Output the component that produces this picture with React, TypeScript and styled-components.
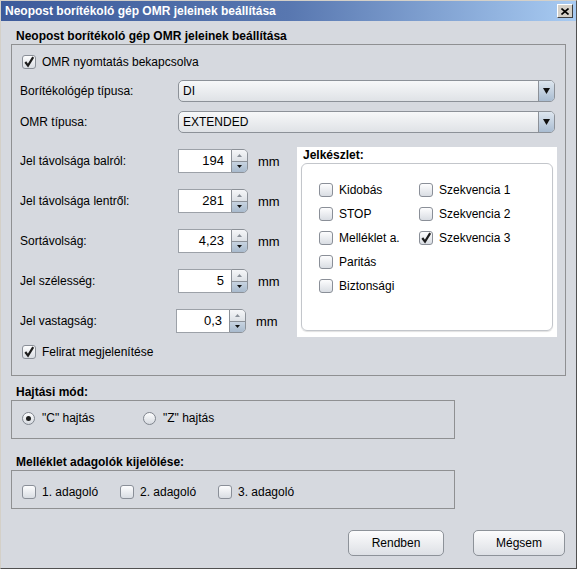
import React from 'react';
import styled, { createGlobalStyle } from 'styled-components';

const GlobalStyle = createGlobalStyle`
  html, body { margin: 0; padding: 0; background: #fff; }
  body {
    font-family: "Liberation Sans", Arial, sans-serif;
    font-size: 12px;
    color: #000;
  }
  * { box-sizing: border-box; }
`;

const Window = styled.div`
  width: 577px;
  height: 569px;
  background: #d6d9df;
  border-top: 1px solid #d4d0c8;
  border-left: 1px solid #d4d0c8;
  border-right: 1px solid #505050;
  border-bottom: 1px solid #505050;
  display: flex;
  flex-direction: column;
`;

const TitleBar = styled.div`
  height: 20px;
  display: flex;
  align-items: center;
  justify-content: space-between;
  padding: 0 3px 0 4px;
  background: linear-gradient(to right, #3d5b9b 0%, #5877b0 50%, #a8cbf2 100%);
`;

const TitleText = styled.span`
  color: #fff;
  font-weight: bold;
  font-size: 12px;
`;

const CloseButton = styled.div`
  width: 16px;
  height: 14px;
  background: #d4d0c8;
  border-top: 1px solid #fff;
  border-left: 1px solid #fff;
  border-right: 1px solid #404040;
  border-bottom: 1px solid #404040;
  display: flex;
  align-items: center;
  justify-content: center;
`;

const Body = styled.div`
  flex: 1;
  display: flex;
  flex-direction: column;
  padding: 8px 10px 0 10px;
`;

const Section = styled.div<{ $gap?: number; $width?: number }>`
  margin-top: ${p => p.$gap ?? 0}px;
  width: ${p => (p.$width ? `${p.$width}px` : 'auto')};
`;

const SectionTitle = styled.div`
  font-weight: bold;
  line-height: 14px;
  padding-left: 5px;
  margin-bottom: 1px;
`;

const Box = styled.div<{ $pad: string }>`
  border: 1px solid #8f9092;
  padding: ${p => p.$pad};
`;

const CheckRow = styled.label<{ $indent?: number; $top?: number }>`
  display: flex;
  align-items: center;
  gap: 6px;
  height: 18px;
  margin-left: ${p => p.$indent ?? 0}px;
  margin-top: ${p => p.$top ?? 0}px;
`;

const CheckBoxShape = styled.span`
  width: 14px;
  height: 14px;
  flex: none;
  border: 1px solid #8a8f98;
  border-radius: 3px;
  background: linear-gradient(#fdfdfe, #d9dde3);
  display: flex;
  align-items: center;
  justify-content: center;
`;

const ComboGrid = styled.div`
  display: grid;
  grid-template-columns: 158px 1fr;
  row-gap: 9px;
  margin-top: 9px;
  margin-right: 2px;
  align-items: center;
`;

const Combo = styled.div`
  height: 22px;
  display: flex;
  border: 1px solid #8c9198;
  border-radius: 5px;
  overflow: hidden;
  background: linear-gradient(#f7f8f9, #dfe2e6);
`;

const ComboText = styled.div`
  flex: 1;
  padding-left: 4px;
  line-height: 20px;
`;

const ComboArrow = styled.div`
  width: 16px;
  border-left: 1px solid #8c9198;
  background: linear-gradient(#dde6ef, #a9bcd1);
  display: flex;
  align-items: center;
  justify-content: center;
`;

const Columns = styled.div`
  display: flex;
  align-items: flex-start;
  margin-top: 14px;
`;

const LeftColumn = styled.div`
  padding-top: 2px;
  display: flex;
  flex-direction: column;
`;

const SpinnerList = styled.div`
  display: flex;
  flex-direction: column;
  gap: 16px;
`;

const SpinnerRow = styled.div`
  display: flex;
  align-items: center;
  height: 24px;
`;

const RowLabel = styled.span`
  width: 158px;
`;

const Spinner = styled.div<{ $nudge?: number }>`
  display: flex;
  width: 70px;
  height: 24px;
  margin-left: ${p => p.$nudge ?? 0}px;
`;

const SpinField = styled.div`
  flex: 1;
  background: #fff;
  border: 1px solid #9ca1a8;
  border-right: none;
  text-align: right;
  padding-right: 7px;
  line-height: 22px;
  font-size: 13px;
`;

const SpinButtons = styled.div`
  width: 17px;
  display: flex;
  flex-direction: column;
  border: 1px solid #8c9198;
  border-radius: 0 5px 5px 0;
  overflow: hidden;
`;

const SpinHalf = styled.div<{ $down?: boolean }>`
  flex: 1;
  display: flex;
  align-items: center;
  justify-content: center;
  background: ${p => (p.$down ? 'linear-gradient(#c8d4e1, #a8bacd)' : 'linear-gradient(#f5f6f8, #dde1e6)')};
  border-top: ${p => (p.$down ? '1px solid #8c9198' : 'none')};
`;

const Unit = styled.span`
  margin-left: 10px;
  font-size: 13px;
`;

const CharsetPanel = styled.div`
  margin-left: auto;
  width: 260px;
  background: #fff;
  padding: 1px 4px 6px 4px;
`;

const CharsetTitle = styled.div`
  font-weight: bold;
  line-height: 14px;
  margin-left: 2px;
  margin-bottom: 1px;
`;

const CharsetBox = styled.div`
  height: 168px;
  border: 1px solid #c3c6cb;
  border-radius: 6px;
  box-shadow: 0 1px 1px rgba(0, 0, 0, 0.12);
  padding: 17px 0 0 17px;
  display: grid;
  grid-template-columns: 100px auto;
  grid-template-rows: repeat(5, 18px);
  grid-auto-flow: column;
  row-gap: 6px;
  align-content: start;
`;

const OptionRow = styled.div`
  display: flex;
  align-items: center;
`;

const OptionItem = styled.label<{ $width: number; $gap: number }>`
  display: flex;
  align-items: center;
  gap: ${p => p.$gap}px;
  width: ${p => p.$width}px;
  height: 18px;
`;

const RadioShape = styled.span`
  width: 13px;
  height: 13px;
  flex: none;
  border: 1px solid #80858e;
  border-radius: 50%;
  background: linear-gradient(#fdfdfe, #d6dae0);
  display: flex;
  align-items: center;
  justify-content: center;
`;

const RadioDot = styled.span`
  width: 5px;
  height: 5px;
  border-radius: 50%;
  background: #1e1e1e;
`;

const ButtonRow = styled.div`
  display: flex;
  justify-content: flex-end;
  gap: 29px;
  margin-top: 21px;
  margin-right: 1px;
`;

const DialogButton = styled.button<{ $width: number }>`
  width: ${p => p.$width}px;
  height: 26px;
  border: 1px solid #8d9299;
  border-radius: 5px;
  background: linear-gradient(#fcfcfd, #dde0e5);
  font-family: "Liberation Sans", Arial, sans-serif;
  font-size: 12px;
  color: #000;
  padding: 0;
`;

const Check = ({ checked }: { checked?: boolean }) => (
  <CheckBoxShape>
    {checked && (
      <svg width="12" height="12" viewBox="0 0 12 12">
        <path d="M2.3 6 L5 9.6 L10.2 1.2" fill="none" stroke="#1c1c1c" strokeWidth="2.2" />
      </svg>
    )}
  </CheckBoxShape>
);

const Radio = ({ selected }: { selected?: boolean }) => (
  <RadioShape>{selected && <RadioDot />}</RadioShape>
);

const DownTriangle = ({ w, h, color }: { w: number; h: number; color: string }) => (
  <svg width={w} height={h} viewBox={`0 0 ${w} ${h}`}>
    <polygon points={`0,0 ${w},0 ${w / 2},${h}`} fill={color} />
  </svg>
);

const UpTriangle = ({ w, h, color }: { w: number; h: number; color: string }) => (
  <svg width={w} height={h} viewBox={`0 0 ${w} ${h}`}>
    <polygon points={`0,${h} ${w},${h} ${w / 2},0`} fill={color} />
  </svg>
);

const spinners = [
  { label: 'Jel távolsága balról:', value: '194' },
  { label: 'Jel távolsága lentről:', value: '281' },
  { label: 'Sortávolság:', value: '4,23' },
  { label: 'Jel szélesség:', value: '5' },
  { label: 'Jel vastagság:', value: '0,3', nudge: -2 },
];

const marks = [
  { label: 'Kidobás' },
  { label: 'STOP' },
  { label: 'Melléklet a.' },
  { label: 'Paritás' },
  { label: 'Biztonsági' },
  { label: 'Szekvencia 1' },
  { label: 'Szekvencia 2' },
  { label: 'Szekvencia 3', checked: true },
];

const feeders = ['1. adagoló', '2. adagoló', '3. adagoló'];

const App: React.FC = () => {
  return (
    <>
      <GlobalStyle />
      <Window>
        <TitleBar>
          <TitleText>Neopost borítékoló gép OMR jeleinek beállítása</TitleText>
          <CloseButton>
            <svg width="8" height="7" viewBox="0 0 8 7">
              <path d="M0.5 0.5 L7.5 6.5 M7.5 0.5 L0.5 6.5" stroke="#000" strokeWidth="1.6" />
            </svg>
          </CloseButton>
        </TitleBar>

        <Body>
          <Section>
            <SectionTitle>Neopost borítékoló gép OMR jeleinek beállítása</SectionTitle>
            <Box $pad="8px 8px 14px 8px">
              <CheckRow $indent={2}>
                <Check checked />
                <span>OMR nyomtatás bekapcsolva</span>
              </CheckRow>

              <ComboGrid>
                <span>Borítékológép típusa:</span>
                <Combo>
                  <ComboText>DI</ComboText>
                  <ComboArrow>
                    <DownTriangle w={7} h={6} color="#111" />
                  </ComboArrow>
                </Combo>
                <span>OMR típusa:</span>
                <Combo>
                  <ComboText>EXTENDED</ComboText>
                  <ComboArrow>
                    <DownTriangle w={7} h={6} color="#111" />
                  </ComboArrow>
                </Combo>
              </ComboGrid>

              <Columns>
                <LeftColumn>
                  <SpinnerList>
                    {spinners.map(s => (
                      <SpinnerRow key={s.label}>
                        <RowLabel>{s.label}</RowLabel>
                        <Spinner $nudge={s.nudge}>
                          <SpinField>{s.value}</SpinField>
                          <SpinButtons>
                            <SpinHalf>
                              <UpTriangle w={5} h={3} color="#8a9099" />
                            </SpinHalf>
                            <SpinHalf $down>
                              <DownTriangle w={5} h={3} color="#111" />
                            </SpinHalf>
                          </SpinButtons>
                        </Spinner>
                        <Unit>mm</Unit>
                      </SpinnerRow>
                    ))}
                  </SpinnerList>
                  <CheckRow $indent={2} $top={10}>
                    <Check checked />
                    <span>Felirat megjelenítése</span>
                  </CheckRow>
                </LeftColumn>

                <CharsetPanel>
                  <CharsetTitle>Jelkészlet:</CharsetTitle>
                  <CharsetBox>
                    {marks.map(m => (
                      <CheckRow key={m.label}>
                        <Check checked={m.checked} />
                        <span>{m.label}</span>
                      </CheckRow>
                    ))}
                  </CharsetBox>
                </CharsetPanel>
              </Columns>
            </Box>
          </Section>

          <Section $gap={9} $width={444}>
            <SectionTitle>Hajtási mód:</SectionTitle>
            <Box $pad="8px 10px 11px 10px">
              <OptionRow>
                <OptionItem $width={121} $gap={7}>
                  <Radio selected />
                  <span>"C" hajtás</span>
                </OptionItem>
                <OptionItem $width={121} $gap={7}>
                  <Radio />
                  <span>"Z" hajtás</span>
                </OptionItem>
              </OptionRow>
            </Box>
          </Section>

          <Section $gap={16} $width={444}>
            <SectionTitle>Melléklet adagolók kijelölése:</SectionTitle>
            <Box $pad="12px 10px 7px 10px">
              <OptionRow>
                {feeders.map(f => (
                  <OptionItem key={f} $width={98} $gap={6}>
                    <Check />
                    <span>{f}</span>
                  </OptionItem>
                ))}
              </OptionRow>
            </Box>
          </Section>

          <ButtonRow>
            <DialogButton $width={96}>Rendben</DialogButton>
            <DialogButton $width={92}>Mégsem</DialogButton>
          </ButtonRow>
        </Body>
      </Window>
    </>
  );
};

export default App;
